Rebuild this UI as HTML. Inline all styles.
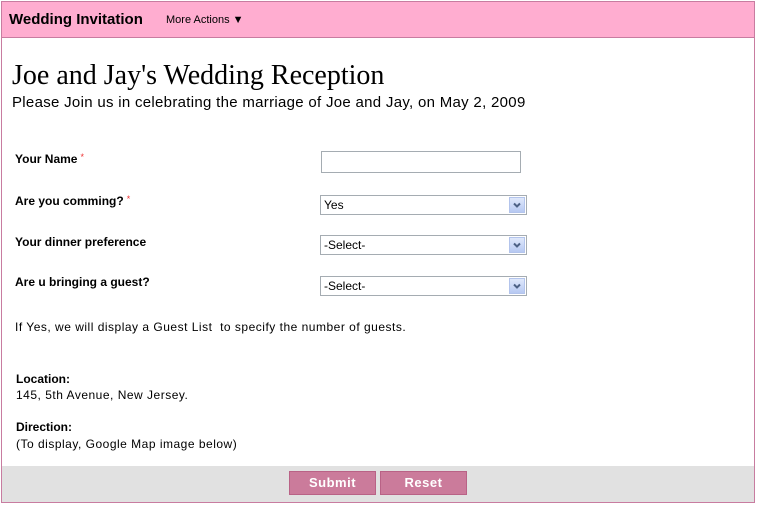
<!DOCTYPE html>
<html><head><meta charset="utf-8"><style>
*{margin:0;padding:0;box-sizing:border-box}
body{width:758px;height:506px;background:#fff;position:relative;font-family:"Liberation Sans",Arial,sans-serif;overflow:hidden}
.box{position:absolute;left:1px;top:1px;width:754px;height:502px;border:1px solid #c87ca0;}
.hdr{position:absolute;left:2px;top:2px;width:752px;height:36px;background:#ffadd0;border-bottom:1px solid #c87ca0}
.a{position:absolute;white-space:nowrap}
.lbl{font-size:12px;font-weight:bold;color:#000}
.req{color:#e33;font-size:9px;font-weight:normal;vertical-align:top;margin-left:3px}
.sel{position:absolute;left:320px;width:207px;height:20px;border:1px solid #a5acb2;background:#fff;font-size:12px;padding:2px 0 0 3px}
.sel .ar{position:absolute;right:1px;top:1px;width:16px;height:16px;background:linear-gradient(#dfe8fb,#b7c9f2);border:1px solid #b3c4ec}
.ft{position:absolute;left:2px;top:466px;width:752px;height:36px;background:#e1e1e1}
.btn{position:absolute;top:471px;height:24px;background:#cb7b9b;border:1px solid #b96286;color:#fff;font-weight:bold;font-size:13px;text-align:center;line-height:22px;letter-spacing:0.5px}
.t{font-size:12px;color:#000;letter-spacing:0.5px}
</style></head><body>
<div class="box"></div>
<div class="hdr"></div>
<div class="a" style="left:9px;top:11px;font-size:15px;font-weight:bold">Wedding Invitation</div>
<div class="a" style="left:166px;top:14px;font-size:11px">More Actions ▼</div>
<div class="a" style="left:12px;top:60px;font-family:'Liberation Serif',serif;font-size:28px">Joe and Jay's Wedding Reception</div>
<div class="a" style="left:12px;top:94px;font-size:15px;letter-spacing:0.3px">Please Join us in celebrating the marriage of Joe and Jay, on May 2, 2009</div>
<div class="a lbl" style="left:15px;top:152px">Your Name<span class="req">*</span></div>
<div class="a lbl" style="left:15px;top:194px">Are you comming?<span class="req">*</span></div>
<div class="a lbl" style="left:15px;top:235px">Your dinner preference</div>
<div class="a lbl" style="left:15px;top:275px">Are u bringing a guest?</div>
<div class="a" style="left:321px;top:151px;width:200px;height:22px;border:1px solid #a5acb2"></div>
<div class="sel" style="top:195px">Yes<div class="ar"><svg width="14" height="14" viewBox="0 0 14 14"><path d="M4 5.5l3 3 3-3" stroke="#4d6185" stroke-width="2" fill="none"/></svg></div></div>
<div class="sel" style="top:235px">-Select-<div class="ar"><svg width="14" height="14" viewBox="0 0 14 14"><path d="M4 5.5l3 3 3-3" stroke="#4d6185" stroke-width="2" fill="none"/></svg></div></div>
<div class="sel" style="top:276px">-Select-<div class="ar"><svg width="14" height="14" viewBox="0 0 14 14"><path d="M4 5.5l3 3 3-3" stroke="#4d6185" stroke-width="2" fill="none"/></svg></div></div>
<div class="a t" style="left:15px;top:320px">If Yes, we will display a Guest List&nbsp; to specify the number of guests.</div>
<div class="a t" style="left:16px;top:372px;font-weight:bold;letter-spacing:0">Location:</div>
<div class="a t" style="left:16px;top:388px">145, 5th Avenue, New Jersey.</div>
<div class="a t" style="left:16px;top:420px;font-weight:bold;letter-spacing:0">Direction:</div>
<div class="a t" style="left:16px;top:437px">(To display, Google Map image below)</div>
<div class="ft"></div>
<div class="btn" style="left:289px;width:87px">Submit</div>
<div class="btn" style="left:380px;width:87px">Reset</div>
</body></html>
